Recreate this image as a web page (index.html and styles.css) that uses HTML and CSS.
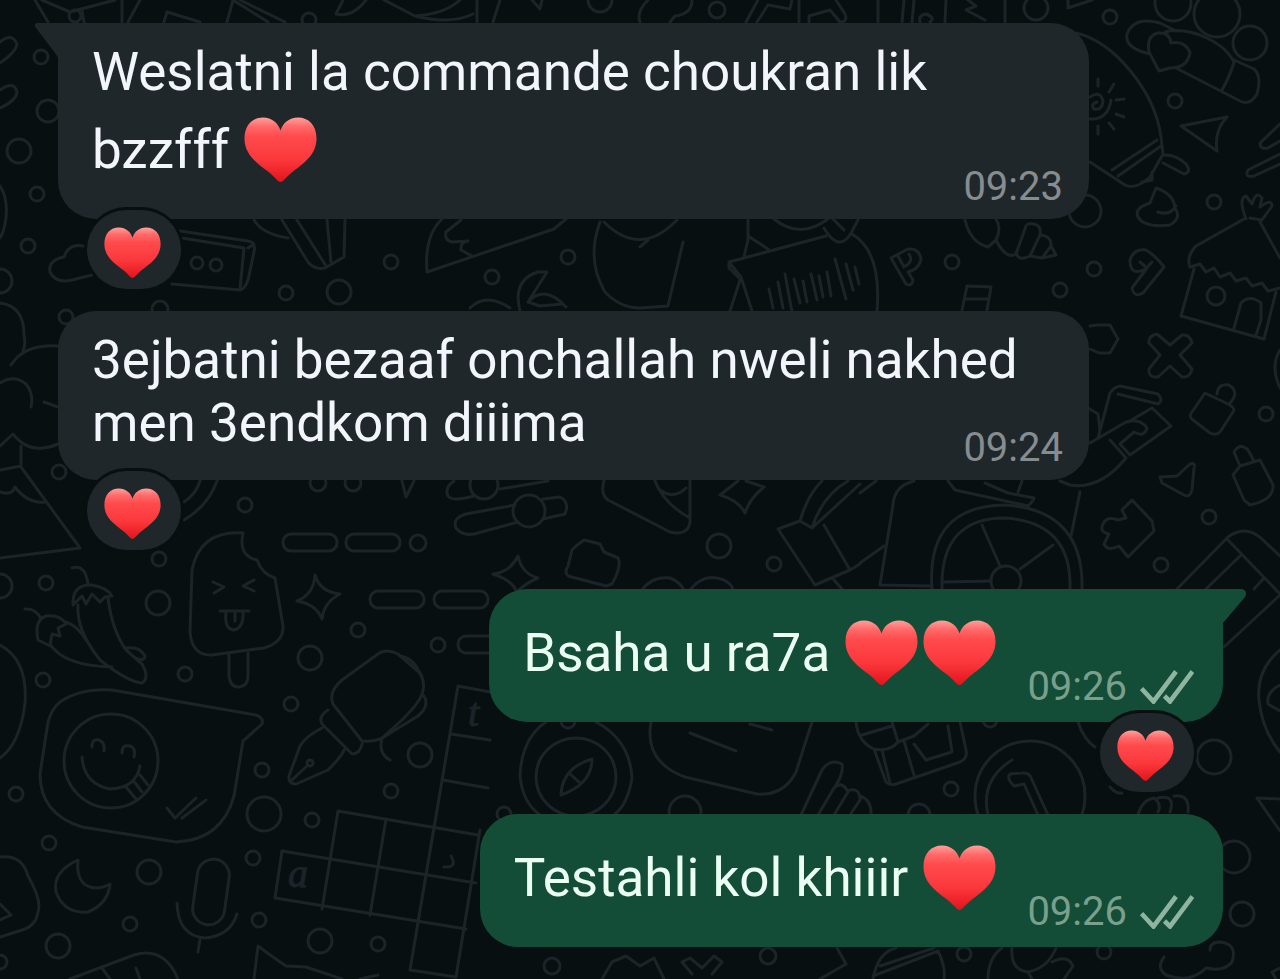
FILE: index.html
```html
<!DOCTYPE html>
<html lang="ar-Latn">
<head>
  <meta charset="UTF-8" />
  <meta name="viewport" content="width=device-width, initial-scale=1.0" />
  <title>Chat</title>
  <link rel="stylesheet" href="styles.css">
</head>
<body>
  <!-- shared shapes -->
  <svg class="defs" aria-hidden="true">
    <defs>
      <linearGradient id="red" x1="0" y1="0" x2="0" y2="1">
        <stop offset="0" stop-color="#ffa19b" />
        <stop offset="0.14" stop-color="#ff6a6a" />
        <stop offset="0.3" stop-color="#ff4a4c" />
        <stop offset="0.65" stop-color="#fb383c" />
        <stop offset="1" stop-color="#e3141d" />
      </linearGradient>
      <symbol id="heart" viewBox="0 0 73 65">
        <path fill="url(#red)" d="M36.500 65C34 65 31 60 24 54.500C12 45.500 0.500 37 0.500 21.500C0.500 8 8.500 0.500 19 0.500C28 0.500 34 6 36.500 13.500C39 6 45 0.500 54 0.500C64.500 0.500 72.500 8 72.500 21.500C72.500 37 61 45.500 49 54.500C42 60 39 65 36.500 65Z" />
      </symbol>
      <symbol id="checks" viewBox="0 0 54 34">
        <path fill="none" stroke="#8fb5a1" stroke-width="4.600" d="M1.500 18.500L13.500 31.500L36 1.500M24.500 26L30 31.500L52.500 1.500" />
      </symbol>
    </defs>
  </svg>

  <svg class="wallpaper" width="1280" height="979" viewBox="0 0 1280 979" aria-hidden="true">
    <!-- dots -->
    <g>
      <circle cx="41" cy="57" r="7" /><circle cx="48" cy="111" r="11" /><circle cx="19" cy="151" r="12" />
      <circle cx="37" cy="194" r="7" /><circle cx="28" cy="246" r="7" /><circle cx="0" cy="281" r="12" />
      <circle cx="391" cy="262" r="7" /><circle cx="286" cy="293" r="7" /><circle cx="339" cy="292" r="12" />
      <circle cx="309" cy="20" r="7" /><circle cx="75" cy="16" r="6" /><circle cx="66" cy="317" r="7" />
      <circle cx="160" cy="309" r="8" /><circle cx="197" cy="263" r="6" /><circle cx="216" cy="265" r="6" />
      <circle cx="600" cy="0" r="12" /><circle cx="717" cy="10" r="8" />
      <circle cx="1036" cy="8" r="12" /><circle cx="1110" cy="17" r="7" /><circle cx="1175" cy="101" r="7" />
      <circle cx="1085" cy="211" r="16" /><circle cx="1214" cy="202" r="7" /><circle cx="952" cy="262" r="7" />
      <circle cx="1094" cy="269" r="7" /><circle cx="1060" cy="290" r="7" /><circle cx="1216" cy="296" r="9" />
      <circle cx="1217" cy="14" r="23" /><circle cx="1173" cy="3" r="18" /><circle cx="1250" cy="43" r="17" />
      <circle cx="59" cy="472" r="7" /><circle cx="318" cy="483" r="8" /><circle cx="353" cy="483" r="8" />
      <circle cx="245" cy="505" r="7" /><circle cx="159" cy="559" r="7" /><circle cx="158" cy="603" r="12" />
      <circle cx="418" cy="543" r="8" /><circle cx="46" cy="583" r="7" /><circle cx="0" cy="586" r="12" />
      <circle cx="358" cy="630" r="7" /><circle cx="310" cy="658" r="12" /><circle cx="43" cy="680" r="7" />
      <circle cx="185" cy="674" r="7" /><circle cx="291" cy="704" r="7" /><circle cx="438" cy="645" r="7" />
      <circle cx="16" cy="794" r="7" /><circle cx="262" cy="770" r="7" /><circle cx="264" cy="814" r="17" />
      <circle cx="312" cy="820" r="7" /><circle cx="420" cy="755" r="12" /><circle cx="391" cy="791" r="7" />
      <circle cx="49" cy="843" r="7" /><circle cx="149" cy="872" r="12" /><circle cx="253" cy="858" r="7" />
      <circle cx="130" cy="924" r="7" /><circle cx="58" cy="946" r="12" /><circle cx="259" cy="920" r="7" />
      <circle cx="320" cy="941" r="12" /><circle cx="378" cy="944" r="7" /><circle cx="0" cy="962" r="7" />
      <circle cx="492" cy="277" r="7" /><circle cx="568" cy="257" r="7" /><circle cx="719" cy="546" r="12" />
      <circle cx="774" cy="564" r="7" /><circle cx="1266" cy="414" r="7" /><circle cx="1209" cy="517" r="7" />
      <circle cx="1161" cy="565" r="7" /><circle cx="1214" cy="757" r="17" /><circle cx="990" cy="720" r="7" />
      <circle cx="568" cy="721" r="7" /><circle cx="951" cy="789" r="7" /><circle cx="685" cy="812" r="16" />
      <circle cx="919" cy="815" r="11" /><circle cx="504" cy="814" r="7" /><circle cx="1234" cy="857" r="16" />
      <circle cx="1242" cy="914" r="12" /><circle cx="964" cy="954" r="7" /><circle cx="1104" cy="952" r="7" />
      <circle cx="552" cy="966" r="8" /><circle cx="768" cy="956" r="8" />
    </g>

    <!-- top edge -->
    <path d="M35 0L48 22M42 0L70 12L115 0M82 11L84 22M122 0V22M140 0L128 22M164 22L167 12L200 22M227 22L233 0L268 22M240 0L285 22M343 0L336 14Q352 18 366 0M384 0L415 16Q450 25 473 14M415 16Q445 14 460 0M477 22V0M493 22L500 0M532 0L540 9L542 0" />
    <path d="M648 0Q636 12 640 22M670 22L675 16Q692 14 692 0M746 22L758 0M757 22L768 5L790 9L792 0M799 22V0M809 22V16L830 10L840 22Q848 22 845 14L836 0M878 22V0M902 22L904 0M912 22L914 0M920 22Q918 15 926 14Q936 18 930 22M945 22L946 0M968 0L976 6L966 10L985 20M1005 22V0M1068 0V8L1092 0" />

    <!-- left edge -->
    <path d="M0 42Q12 32 17 44Q16 52 0 63M0 90Q14 80 17 92Q16 101 0 108M0 186Q8 198 6 218Q4 232 0 238M0 303Q24 306 24 335Q26 345 23 351M11 365Q24 344 58 346M0 383Q14 374 26 384Q34 394 31 407M0 446L13 434Q30 456 58 444M21 446V466L0 470M21 467L80 548L0 558M45 502Q28 504 15 487Q12 496 0 492M0 645Q28 660 25 703Q20 744 0 758M44 402L58 407" />
    <path d="M0 857Q22 854 28 876Q42 900 38 912Q36 926 22 930L0 937M0 904L11 915L0 920" />

    <!-- cloud, cassette, pencils -->
    <path d="M90 248Q70 240 64 257Q48 260 50 272Q56 284 72 280L92 275M180 231L248 241Q256 242 254 252L248 280Q245 289 240 290L172 284M182 238L244 248L240 289M248 248L254 244" />
    <path d="M254 220Q262 234 288 238M282 220L308 262Q314 270 325 268L344 257L345 220M297 220L326 266M327 220L331 262" />
    <path d="M184 502Q196 494 200 481M184 520Q208 506 217 481" />

    <!-- pizza, balloon, palm -->
    <path d="M442 219Q424 236 427 272L554 229L566 219M461 220L446 232Q444 240 452 242L468 241Q460 242 461 250L472 256M600 222Q586 260 605 292Q620 308 640 308L668 306L683 242M604 222Q640 258 677 220M640 247L648 240" />
    <path d="M520 311Q512 280 538 272H547L528 302Q545 284 566 307M470 308Q486 292 510 308M528 302L540 306L562 304" />

    <!-- voice note card -->
    <path d="M748 220V240L744 257M748 236L768 249M774 219Q800 240 828 219M824 228Q838 252 850 235L858 220M832 218L844 230M729 262L826 236M852 234Q882 252 877 311M729 262L741 277L730 311M741 277L752 311M729 262V268L741 280" />
    <path d="M769 289L773 308M778 282L783 308M785 274L792 312M794 279L800 303M803 281L807 302M811 274L817 300M819 276L823 297M827 272L831 296M835 259L846 299M846 264L853 290M855 267L859 284" />

    <!-- keys and shells -->
    <path d="M891 258L908 249Q920 248 921 260Q918 270 908 272L913 280Q912 287 906 284L891 258M898 256L904 267Q914 262 909 254M965 220Q970 242 988 247L996 240Q1002 228 996 219M996 240Q1006 260 1016 254L1026 226M1028 224Q1042 222 1040 235L1030 256Q1018 262 1016 252M1040 235Q1052 236 1051 246L1042 258L1030 256M1051 246L1056 255L1042 258M962 310L967 286L991 287L987 310M965 299H989" />
    <path d="M1147 268Q1130 278 1130 260Q1134 248 1146 250Q1156 256 1164 267L1143 293Q1134 298 1132 288L1147 268L1140 262M1152 262L1143 272" />

    <!-- light bulb -->
    <path d="M1076 33C1115 42 1155 92 1161 137L1163 154L1150 177Q1136 190 1125 185L1090 162M1157 140L1112 170M1161 146L1118 176M1163 155Q1176 154 1186 164Q1192 172 1184 174L1163 163M1152 172V180L1142 182M1090 97Q1100 90 1103 101Q1102 111 1094 109Q1090 104 1097 102M1090 119Q1108 120 1111 100M1098 79V86M1114 84L1109 92M1124 99L1116 100M1124 117L1116 114M1114 129L1109 123M1098 134V126" />

    <!-- hot dog with a heart -->
    <path d="M1150 54Q1124 48 1127 34Q1134 16 1160 23L1176 31M1165 32C1190 26 1224 42 1234 62Q1230 76 1222 90M1176 68L1240 101Q1250 106 1257 94Q1262 76 1254 69L1232 59M1159 71L1149 52Q1146 36 1158 33Q1170 32 1171 43Q1184 40 1190 52Q1188 68 1170 68Z" />
    <path d="M1181 126L1227 117Q1214 130 1217 151ZM1280 124L1260 143Q1260 150 1268 148L1280 141M1280 154L1248 170Q1244 178 1254 176L1280 164M1156 188L1150 203Q1134 208 1138 217Q1144 228 1170 225Q1182 218 1175 208Q1174 194 1156 188ZM1158 212Q1170 216 1176 206" />

    <!-- house -->
    <path d="M1244 219L1196 246Q1186 256 1190 267M1260 222L1280 258M1246 219Q1238 198 1246 196L1252 204Q1256 190 1262 198L1260 207Q1272 198 1272 206L1262 220L1250 218M1194 269L1181 316L1264 339L1276 292M1234 328L1241 303Q1250 294 1261 303V320L1256 335M1190 267L1200 264L1206 272L1214 268L1220 277L1230 273L1236 281L1246 278L1252 286L1262 283L1268 291L1280 288" />

    <!-- hexagon, cross, locks -->
    <path d="M1090 326L1098 325H1110L1118 339L1110 353H1099L1090 349M1157 334L1170 345L1182 335Q1190 334 1192 343L1180 355L1192 369Q1190 378 1182 377L1170 366L1158 377Q1148 378 1149 369L1160 355L1149 343Q1148 336 1157 334ZM1205 393L1228 404Q1236 408 1233 412L1220 432Q1216 436 1210 433L1193 420Q1188 416 1192 412ZM1217 394Q1218 383 1229 385Q1240 392 1230 403M1240 466L1260 460L1273 485Q1274 500 1250 505L1244 500L1233 475ZM1240 466L1234 452Q1240 442 1248 450L1254 461M1280 350Q1270 366 1280 388" />
    <path d="M1160 477L1177 476L1190 464Q1196 462 1194 468L1192 490Q1190 498 1184 495L1162 483ZM1122 510L1132 500L1152 521L1154 531L1128 557L1119 546Q1108 552 1104 544L1109 534Q1098 532 1104 522Q1108 516 1118 520L1126 518Z" />

    <!-- hand with a card, cart -->
    <path d="M1088 408L1098 414L1100 430M1098 438L1110 393Q1114 387 1120 386L1158 394Q1164 400 1158 404L1118 394M1090 443L1126 422Q1140 418 1147 428Q1144 438 1134 432L1120 444L1130 455L1171 426L1152 408L1128 422M1110 440L1126 458Q1100 490 1070 485L1060 481M1080 492L1071 536M860 493L876 481M914 481Q894 486 893 505L880 585L930 586M948 481L955 490L1028 506Q1034 500 1034 498L1008 493L985 483M1022 481L1018 492M884 546L860 563" />
    <path d="M932 589Q926 506 1005 505Q1084 510 1082 589M942 589Q940 518 1005 518Q1072 522 1070 589M982 525L1000 566M1053 545L1020 569M944 582L991 581" />
    <circle cx="1006" cy="581" r="15" />
    <path d="M1177 589L1228 537Q1246 524 1262 539L1280 556M1228 540L1280 594M1206 589L1240 556M1280 595L1224 647M1254 589L1264 578" />

    <!-- sliders, cup, sparkles, pot -->
    <path d="M454 481Q444 488 448 496Q452 502 474 496M500 489L548 481M515 505L466 514Q452 518 456 528Q462 536 474 534L518 522M543 499L560 497Q570 502 565 514L543 519" />
    <circle cx="529" cy="511" r="16" /><circle cx="484" cy="485" r="14" />
    <path d="M402 481L406 497L414 481M604 481Q600 494 608 500L670 532Q688 536 690 522V481M655 481Q664 504 690 518M660 490Q674 500 686 488M738 481L720 495Q738 500 745 513Q750 498 764 487L746 481" />
    <path d="M518 556Q522 574 538 578Q524 584 517 592Q512 580 493 574Q510 572 518 556ZM576 546L584 540L600 544L604 552L618 558Q622 566 612 584L606 586L568 576Q564 572 568 566L572 550ZM642 590Q652 576 670 578Q680 582 684 590M690 590Q704 572 724 580Q732 584 733 590M778 529L800 521L812 528L860 484M800 521Q808 494 822 481M812 528Q822 496 848 481M778 529L815 585L850 570L824 525M850 570L860 564M834 580L842 589" />

    <!-- dashes -->
    <rect x="283" y="534" width="54" height="17" rx="8" /><rect x="346" y="534" width="54" height="17" rx="8" />
    <rect x="370" y="591" width="54" height="17" rx="8" /><rect x="434" y="591" width="54" height="17" rx="8" />
    <rect x="458" y="636" width="54" height="17" rx="8" />

    <!-- ice cream -->
    <path d="M243 533Q200 530 192 570L190 632Q192 656 212 655L264 648Q284 642 283 626L275 578Q262 574 257 560Q238 556 243 533ZM229 655V676Q230 687 239 687Q248 686 248 676V653M213 582L224 587L214 593M254 580L243 586L254 591M220 611L249 611M226 613Q224 629 234 630Q244 628 243 612M235 613V621" />
    <path d="M315 575Q320 592 340 594Q324 602 322 619Q316 604 297 601Q314 594 315 575Z" />

    <!-- peppers -->
    <path d="M72 568Q86 564 88 585M73 605Q72 584 92 585Q108 588 112 596L105 597L100 602L92 594L86 604L82 596ZM78 605Q76 630 100 660Q128 682 142 683Q150 678 142 664L126 650Q112 630 108 598M126 648Q140 646 145 656Q144 662 136 658M25 609Q36 608 41 619M38 640Q34 620 46 616Q60 614 66 624L58 628L60 636L52 634L50 646ZM66 622Q78 626 86 640M50 644Q64 666 112 667" />

    <!-- speech bubble -->
    <path d="M60 702Q80 688 112 690L256 715Q264 718 262 724L243 741L234 796Q222 840 176 842L82 827Q40 814 40 774L48 722Q52 708 60 702ZM92 747Q92 738 99 740Q105 742 104 751M122 753Q122 744 130 746Q136 748 134 757M82 757Q84 784 110 789Q136 788 140 766M126 787L136 799M133 780L142 792M140 775L148 785M167 808L175 818L196 798M182 818L206 800" />
    <circle cx="111" cy="761" r="47" />

    <!-- fountain pen -->
    <path d="M333 704Q328 692 342 680L378 654Q386 648 398 654L420 673Q426 684 422 694Q420 702 402 720L382 738Q374 742 362 741ZM328 710Q318 716 322 724L352 754Q360 754 362 744M400 656Q414 658 420 674M424 696Q430 706 418 716L382 738Q378 754 390 760M322 728Q306 736 300 746L289 776Q288 784 296 784L328 770Q342 756 344 750M292 780L308 765" />
    <circle cx="310" cy="763" r="3" />

    <!-- crossword -->
    <path d="M458 686L490 692M458 686L410 970L456 977L480 830M451 734L490 740M443 780L488 788M338 811L478 835M338 811L322 909M282 851L476 883M282 851L275 898L466 929M386 819L370 915M434 827L418 922" />
    <text x="468" y="726">t</text>
    <text x="288" y="887">a</text>
    <path d="M451 856Q458 868 444 867" />

    <!-- moon, microphone -->
    <path d="M78 860Q52 872 56 892Q64 914 88 912Q108 904 110 884Q96 892 84 884Q76 876 78 860Z" />
    <rect x="195" y="859" width="32" height="66" rx="16" transform="rotate(8 211 892)" />
    <path d="M177 903Q178 936 205 938Q230 936 237 914M200 939L198 952M70 979L134 955Q164 946 178 979M102 968L110 979M136 968L140 979M254 979L258 946Q274 958 286 966L306 967L342 979M360 979L378 975" />

    <!-- compass, note, gift -->
    <path d="M546 722Q522 738 520 775Q522 802 540 815M596 722Q630 740 632 778Q628 804 614 815M561 795Q562 768 592 759Q592 784 561 795ZM569 773L580 783" />
    <ellipse cx="576" cy="777" rx="40" ry="39" />
    <path d="M651 722Q644 762 685 777L757 794Q784 796 796 772L812 722M690 733L736 751M750 724L772 730M856 722Q858 742 874 749L886 782Q890 786 896 784L960 762Q968 758 966 750L960 722M862 735L892 726M892 722L898 742Q890 752 874 749M898 742L914 736L928 724M904 741L914 775M882 750L890 783M914 744L926 760L952 752L948 726" />
    <path d="M801 815L822 770Q830 758 842 764Q844 774 834 788L818 815M834 788Q842 780 848 792L834 815M850 790Q860 788 860 800L850 815M860 796Q872 800 871 815" />

    <!-- coin, berries -->
    <circle cx="1030" cy="796" r="55" />
    <path d="M988 815Q980 780 1012 760M1038 815L1024 784L1014 786Q1006 778 1010 774L1022 773Q1030 772 1032 780L1048 815M1078 722Q1084 740 1095 747M1110 787Q1116 794 1122 793M1138 815Q1142 800 1154 798Q1162 804 1158 812M1158 798Q1176 794 1170 812M1174 796Q1190 794 1188 812M1280 650Q1256 670 1259 700Q1262 730 1280 752M1280 685Q1266 692 1268 704L1280 711M1280 831L1257 798L1280 799" />

    <!-- bottom edge -->
    <path d="M837 948L846 964L820 979M873 979Q878 952 896 948M873 976L938 951Q946 968 944 979M880 966L934 948M988 979Q988 958 1002 948M1012 948Q1010 970 1028 972Q1048 968 1056 948M1028 972L1032 979M1052 962Q1068 954 1073 966L1064 979M1164 957Q1156 968 1166 975Q1190 984 1206 968Q1224 972 1232 962Q1238 944 1220 942Q1210 942 1210 950M1280 968L1272 972L1276 979" />
    <path d="M602 979L612 962L626 956L640 966L654 958L664 979M682 962L690 958L702 968L714 956L722 962L712 974M682 962L692 974" />
  </svg>

  <main class="chat">
    <article class="message incoming">
      <div class="bubble first">
        <svg class="tail" width="26" height="38" viewBox="0 0 26 38" aria-hidden="true"><path d="M26 0H3Q-1 1 2 5L18 26Q23 32 26 38Z" /></svg>
        <p class="text">Weslatni la commande choukran lik bzzfff <svg class="emoji" viewBox="-2 -13 78 90" role="img" aria-label="heart"><use href="#heart" width="73" height="65" /></svg></p>
        <div class="meta"><time>09:23</time></div>
      </div>
      <button class="reaction" type="button" aria-label="1 heart reaction"><svg width="57" height="51"><use href="#heart" /></svg></button>
    </article>

    <article class="message incoming">
      <div class="bubble">
        <p class="text">3ejbatni bezaaf onchallah nweli nakhed men 3endkom diiima</p>
        <div class="meta"><time>09:24</time></div>
      </div>
      <button class="reaction" type="button" aria-label="1 heart reaction"><svg width="57" height="51"><use href="#heart" /></svg></button>
    </article>

    <article class="message outgoing turn">
      <div class="bubble first">
        <svg class="tail" width="26" height="38" viewBox="0 0 26 38" aria-hidden="true"><path d="M0 0H21Q27 2 24 8L2 34Q1 36 0 38Z" /></svg>
        <p class="text">Bsaha u ra7a <svg class="emoji" viewBox="-2 -13 78 90" role="img" aria-label="heart"><use href="#heart" width="73" height="65" /></svg><svg class="emoji" viewBox="-2 -13 78 90" role="img" aria-label="heart"><use href="#heart" width="73" height="65" /></svg></p>
        <div class="meta"><time>09:26</time><svg class="checks" role="img" aria-label="Delivered"><use href="#checks" /></svg></div>
      </div>
      <button class="reaction" type="button" aria-label="1 heart reaction"><svg width="57" height="51"><use href="#heart" /></svg></button>
    </article>

    <article class="message outgoing">
      <div class="bubble">
        <p class="text">Testahli kol khiiir <svg class="emoji" viewBox="-2 -13 78 90" role="img" aria-label="heart"><use href="#heart" width="73" height="65" /></svg></p>
        <div class="meta"><time>09:26</time><svg class="checks" role="img" aria-label="Delivered"><use href="#checks" /></svg></div>
      </div>
    </article>
  </main>
</body>
</html>
```
FILE: styles.css
```css
* {
  box-sizing: border-box;
}
body {
  position: relative;
  min-height: 100vh;
  margin: 0;
  overflow: hidden;
  background: #070f11;
  font-family: Roboto, sans-serif;
}
.defs {
  position: absolute;
  width: 0;
  height: 0;
}
/* doodles behind the chat */
.wallpaper {
  position: absolute;
  top: 0;
  left: 0;
  fill: none;
  stroke: #1c2428;
  stroke-width: 3;
  stroke-linejoin: round;
  stroke-linecap: round;
}
.wallpaper text {
  fill: #1c2428;
  stroke-width: 1;
  font: italic 40px "Liberation Serif", serif;
}
.chat {
  position: relative;
  display: flex;
  flex-direction: column;
  gap: 22px;
  padding: 23px 57px 32px 58px;
}
.message {
  display: flex;
  flex-direction: column;
  align-items: flex-start;
}
.outgoing {
  align-items: flex-end;
}
.turn {
  margin-top: 17px;
}
.bubble {
  position: relative;
  display: flex;
  flex-direction: column;
  max-width: 1031px;
  padding: 18px 26px 8px 34px;
  border-radius: 38px;
  background: #20272b;
  color: #f2f5fc;
}
.outgoing .bubble {
  flex-direction: row;
  align-items: flex-end;
  gap: 28px;
  padding: 18px 29px 11px 34px;
  background: #144d37;
  color: #ebfff3;
}
.incoming .first {
  border-top-left-radius: 0;
}
.outgoing .first {
  border-top-right-radius: 0;
}
.tail {
  position: absolute;
  top: 0;
  left: -24px;
  fill: #20272b;
}
.outgoing .tail {
  left: auto;
  right: -24px;
  fill: #144d37;
}
.text {
  margin: 0;
  font-size: 53px;
  line-height: 63px;
}
.outgoing .text {
  padding-bottom: 14px;
}
.emoji {
  width: 78px;
  height: 90px;
  vertical-align: -26px;
}
.meta {
  display: flex;
  align-items: center;
  align-self: flex-end;
  gap: 13px;
  margin-top: -31px;
  color: #868c90;
  font-size: 40px;
  line-height: 48px;
}
.outgoing .meta {
  margin-top: 0;
  color: #7a9f8d;
}
.checks {
  width: 54px;
  height: 34px;
}
.reaction {
  z-index: 1;
  display: flex;
  align-items: center;
  justify-content: center;
  width: 94px;
  height: 79px;
  margin: -9px 29px 0;
  padding: 5px 3px 0 0;
  border: 0;
  border-radius: 40px;
  background: #20272b;
  box-shadow: 0 0 0 3px #070f11;
  cursor: pointer;
}
```
